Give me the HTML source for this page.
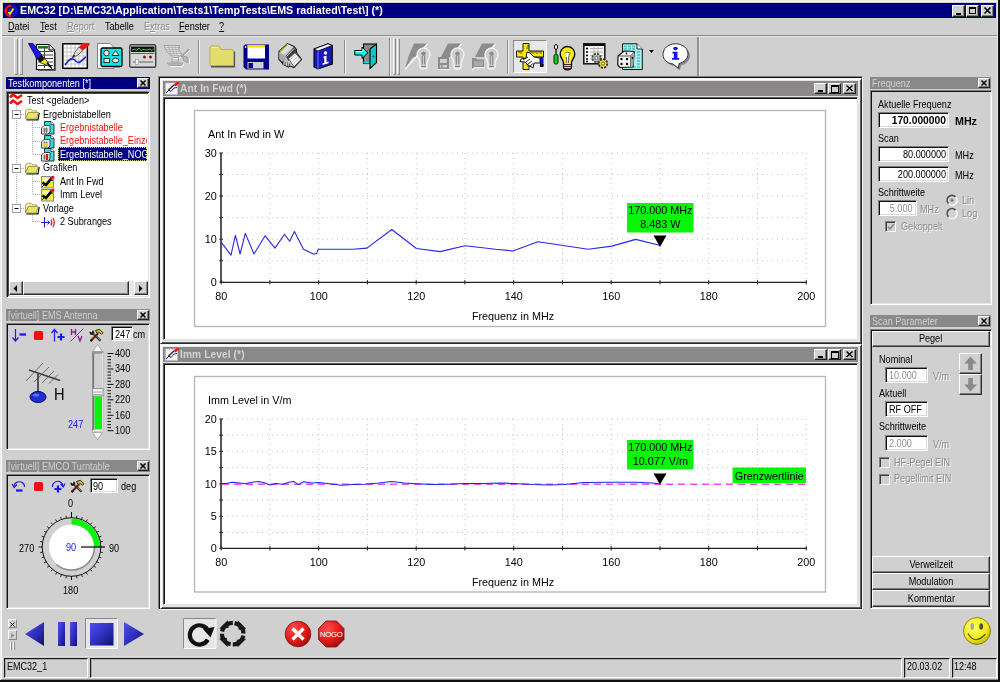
<!DOCTYPE html>
<html>
<head>
<meta charset="utf-8">
<title>EMC32</title>
<style>
*{box-sizing:border-box;margin:0;padding:0}
html,body{width:1000px;height:682px;overflow:hidden;background:#d0d0d0}
body{position:relative;font-family:"Liberation Sans",sans-serif;font-size:11px;color:#000;line-height:13px}
.a{position:absolute}
.t{position:absolute;white-space:nowrap;line-height:13px;font-size:10.6px;transform:scaleX(.86);transform-origin:0 50%}
.b{transform:scaleX(.97);font-size:11px}
.s{display:inline-block;font-size:10.6px;transform:scaleX(.86);transform-origin:0 50%}
.r .s{transform-origin:100% 50%}
.rais .s{transform-origin:50% 50%}
.navy{background:#000080}
.sunk{position:absolute;border:1px solid;border-color:#808080 #fff #fff #808080;box-shadow:inset 1px 1px 0 #101010}
.panel{position:absolute;border-style:solid;border-width:1px;border-color:#808080 #fff #fff #808080;box-shadow:inset 1px 1px 0 #101010, inset -1px -1px 0 #e4e4e4}
.rais{position:absolute;border:1px solid;border-color:#fff #303030 #303030 #fff;box-shadow:inset -1px -1px 0 #808080;background:#d0d0d0;text-align:center;font-size:11px;line-height:13px;white-space:nowrap}
.cap{position:absolute;height:12px;font-size:11px;line-height:12px;white-space:nowrap;padding-left:2px;overflow:hidden}
.cg{background:#8a8888;color:#d0d0d0}
.xbtn{position:absolute;width:12px;height:10px;background:#d0d0d0;border:1px solid;border-color:#fff #202020 #202020 #fff;box-shadow:inset -1px -1px 0 #808080}
.dis{color:#8a8a8a;text-shadow:1px 1px 0 #fff}
.inp{position:absolute;background:#fff;border:1px solid;border-color:#808080 #fff #fff #808080;box-shadow:inset 1px 1px 0 #101010, inset -1px -1px 0 #d8d8d8;font-size:11px;line-height:12px;white-space:nowrap;padding:1px 3px 0 3px;overflow:hidden}
.r{text-align:right}
.vsep{position:absolute;width:2px;border-left:1px solid #8a8a8a;border-right:1px solid #f4f4f4}
.grip{position:absolute;width:3px;border:1px solid;border-color:#f8f8f8 #8a8a8a #8a8a8a #f8f8f8}
svg{position:absolute;overflow:visible}
.ct{font-family:"Liberation Sans",sans-serif;font-size:10.8px;fill:#000}
u{text-decoration:underline}
</style>
</head>
<body>

<!-- outer frame -->
<div class="a" style="left:0;top:0;width:1000px;height:682px;border:1px solid;border-color:#ececec #000 #000 #ececec;box-shadow:inset 1px 1px 0 #f8f8f8, inset -1px -1px 0 #808080"></div>
<div class="a" style="left:998px;top:0;width:2px;height:682px;background:#101010"></div>
<div class="a" style="left:997px;top:1px;width:1px;height:679px;background:#e8e8e8"></div>
<div class="a" style="left:0;top:680px;width:1000px;height:2px;background:#101010"></div>
<div class="a" style="left:1px;top:679px;width:997px;height:1px;background:#909090"></div>

<!-- title bar -->
<div class="a navy" id="titlebar" style="left:3px;top:3px;width:993px;height:15px"></div>
<svg style="left:4px;top:4px" width="14" height="14" viewBox="0 0 14 14">
 <path d="M7 0.5 A6.5 6.5 0 0 0 7 13.5 L7 11 A4 4 0 0 1 7 3 Z" fill="#f01010"/>
 <path d="M7 0.5 A6.5 6.5 0 0 1 7 13.5 L7 11 A4 4 0 0 0 7 3 Z" fill="#1010f0"/>
 <circle cx="7" cy="7" r="3.6" fill="#102090"/>
 <path d="M4.5 8 L6 10 L9.5 4.5" stroke="#ffe000" stroke-width="1.8" fill="none"/>
</svg>
<div class="t b" id="title" style="left:20px;top:4px;color:#fff;font-weight:bold;letter-spacing:0.01px">EMC32 [D:\EMC32\Application\Tests1\TempTests\EMS radiated\Test\] (*)</div>
<!-- title buttons -->
<div class="xbtn" style="left:952px;top:5px;width:13px;height:12px"><div class="a" style="left:3px;top:7px;width:5px;height:2px;background:#000"></div></div>
<div class="xbtn" style="left:966px;top:5px;width:13px;height:12px"><div class="a" style="left:2px;top:1px;width:7px;height:7px;border:1px solid #000;border-top-width:2px"></div></div>
<div class="xbtn" style="left:981px;top:5px;width:13px;height:12px"><svg style="left:2px;top:1px" width="8" height="8"><path d="M0.5 0.5 L6.5 6.5 M6.5 0.5 L0.5 6.5" stroke="#000" stroke-width="1.6"/></svg></div>

<!-- menu -->
<div class="t" style="left:8px;top:20px"><u>D</u>atei</div>
<div class="t" style="left:40px;top:20px"><u>T</u>est</div>
<div class="t dis" style="left:67px;top:20px"><u>R</u>eport</div>
<div class="t" style="left:105px;top:20px">Tabelle</div>
<div class="t dis" style="left:144px;top:20px">E<u>x</u>tras</div>
<div class="t" style="left:179px;top:20px"><u>F</u>enster</div>
<div class="t" style="left:219px;top:20px"><u>?</u></div>
<div class="a" style="left:2px;top:35px;width:995px;height:1px;background:#8a8a8a"></div>
<div class="a" style="left:2px;top:36px;width:995px;height:1px;background:#e8e8e8"></div>
<!-- ===== main toolbar ===== -->
<div class="grip" style="left:14px;top:38px;height:37px;width:4px"></div>
<div class="grip" style="left:19px;top:38px;height:37px;width:4px"></div>

<!-- icon1: sheet + pen -->
<svg style="left:28px;top:43px" width="28" height="28" viewBox="0 0 28 28">
 <path d="M8.5 1.5 H21 L26.5 7 V26.5 H8.5 Z" fill="#fff" stroke="#000" stroke-width="1.2"/>
 <path d="M21 1.5 V7 H26.5" fill="#d8d8d8" stroke="#000" stroke-width="1"/>
 <rect x="10" y="3" width="10" height="2.6" fill="#108010"/>
 <path d="M10 8.5H25 M10 12H25 M10 15.500H25 M10 19H25 M10 22.500H25 M16.5 3V25" stroke="#404040" stroke-width="1"/>
 <path d="M27 9 V27 H10" stroke="#404040" stroke-width="1.4" fill="none"/>
 <path d="M0.500 0.500 L5 0.500 L14 12 L9 16 Z" fill="#1818e0" stroke="#000060" stroke-width="0.8"/>
 <path d="M9 16 L14 12 L17 15.500 L12 19.500 Z" fill="#101010"/>
 <path d="M12 19.500 L17 15.500 L23 24 Z" fill="#f0e020" stroke="#202020" stroke-width="0.8"/>
 <path d="M19 20 L24 25.500" stroke="#000" stroke-width="1.4"/>
</svg>

<!-- icon2: chart + pencil -->
<svg style="left:62px;top:43px" width="28" height="27" viewBox="0 0 28 27">
 <rect x="0.8" y="0.8" width="24.500" height="24.500" fill="#fff" stroke="#000" stroke-width="1.5"/>
 <path d="M5 2V24 M9 2V24 M13 2V24 M17 2V24 M21 2V24 M2 5H24 M2 9H24 M2 13H24 M2 17H24 M2 21H24" stroke="#c4c4c4" stroke-width="1"/>
 <path d="M3 22 C6 18 8 15 11 16 S15 21 18 19 S22 15 24 14" stroke="#1828c0" stroke-width="1.6" fill="none"/>
 <path d="M10 15 L13 9 L17 4 L21 7 L16 12 Z" fill="#d8d8d8" stroke="#505050" stroke-width="0.8"/>
 <path d="M10 15 L12 11.500 L13.500 13 Z" fill="#202020"/>
 <path d="M17 4 L21 0 L27.500 0 L27.500 2 L21 7.500 Z" fill="#e81818"/>
</svg>

<!-- icon3: shapes -->
<svg style="left:97px;top:43px" width="26" height="27" viewBox="0 0 26 27">
 <path d="M0.500 0.500 H13 L17 4.500 V25.500 H0.500 Z" fill="#fff" stroke="#808080" stroke-width="1"/>
 <rect x="4" y="5" width="21" height="18.500" rx="1.500" fill="#10e8e8" stroke="#000" stroke-width="1.3"/>
 <circle cx="9.500" cy="10" r="2.800" fill="#e8e8e8" stroke="#303030" stroke-width="1"/>
 <path d="M15 12.500 L18.500 7.500 L22 12.500 Z" fill="#e8e8e8" stroke="#303030" stroke-width="1"/>
 <rect x="7" y="15.500" width="5.500" height="4" fill="#e8e8e8" stroke="#303030" stroke-width="1"/>
 <ellipse cx="18.500" cy="17.500" rx="3.400" ry="2.300" fill="#e8e8e8" stroke="#303030" stroke-width="1"/>
</svg>

<!-- icon4: instrument -->
<svg style="left:129px;top:44px" width="28" height="24" viewBox="0 0 28 24">
 <rect x="0.700" y="0.700" width="26" height="22.500" rx="1.500" fill="#d8d8d8" stroke="#404040" stroke-width="1.4"/>
 <rect x="2" y="2.500" width="23.500" height="5.500" fill="#101010"/>
 <path d="M3 6 L6 5 L8 6.500 L10 4 L12 6.500 L14 5.500 L18 6 L21 5 L23 6.500 L25 4.500" stroke="#18e018" stroke-width="1" fill="none"/>
 <path d="M2 9.500H25.500" stroke="#606060" stroke-width="1"/>
 <circle cx="15.500" cy="13" r="1.500" fill="#901010"/>
 <circle cx="21.500" cy="13" r="1.500" fill="#901010"/>
 <path d="M4 18H24" stroke="#909090" stroke-width="1.6"/>
 <rect x="6.500" y="15.500" width="3" height="5" fill="#f4f4f4" stroke="#909090" stroke-width="0.600"/>
</svg>

<!-- icon5: disabled -->
<svg style="left:163px;top:44px" width="28" height="25" viewBox="0 0 28 25">
 <g stroke="#f8f8f8" stroke-width="1" fill="none" transform="translate(1,1)">
  <path d="M1 1.500 H17 M5 9 L10 13.500 H15 L19 10 M4 19 H20 L18.500 21.500 H6 Z M19 12 L26 5 M22 12.500 L25.500 14 V19"/>
 </g>
 <g stroke="#a4a4a4" stroke-width="1" fill="none">
  <path d="M1 1.500 H17 L15.500 6 L19 10 L15 13.500 H10 L5 9 L2.500 5 Z" fill="#dcdcdc"/>
  <path d="M2.500 3.500 H16.500 M3 5.500 H15.500 M4.500 7.500 H16.500 M6 9.500 H18 M8 11.500 H17 M5 1.500 L9 13 M8.500 1.500 L12 13.500 M12 1.500 L14.500 13 M15 1.500 L16.500 7" stroke-width="0.800" stroke="#b0b0b0"/>
  <path d="M9 14 V18 H15.500 V13.500" stroke="#a0a0a0"/>
  <path d="M4 19 H20 L18.500 21.500 H6 Z" fill="#b4b4b4"/>
  <path d="M18 13 L26 5" stroke-width="1.400" stroke="#9a9a9a"/>
  <path d="M19.500 11.500 L25 13.500 V18.500 L20.500 16.500 Z" fill="#bcbcbc" stroke="#9a9a9a"/>
 </g>
</svg>

<div class="vsep" style="left:198px;top:40px;height:33px"></div>

<!-- icon6: folder -->
<svg style="left:209px;top:45px" width="27" height="23" viewBox="0 0 27 23">
 <path d="M2 21.800 H25.300 V6.500" stroke="#505050" stroke-width="1.600" fill="none"/>
 <path d="M1 20.500 V3 Q1 1 3 1 H9 Q11 1 11.500 3 L12 4.500 H22.500 Q24.500 4.500 24.500 6.500 V20.500 Z" fill="#e4dc6c" stroke="#b8b050" stroke-width="1"/>
 <path d="M2.500 2.500 H9.500" stroke="#f4f0a0" stroke-width="1"/>
</svg>

<!-- icon7: floppy -->
<svg style="left:243px;top:44px" width="27" height="26" viewBox="0 0 27 26">
 <path d="M2 0.500 H26 V25.500 H3 L0.500 23 V2 Z" fill="#000088"/>
 <rect x="4.500" y="1" width="17.500" height="13.500" fill="#fff"/>
 <rect x="4.500" y="1" width="17.500" height="2.600" fill="#f0e010"/>
 <rect x="4.500" y="18" width="16" height="6.500" fill="#d0d0d0"/>
 <rect x="5.500" y="19" width="4.500" height="5" fill="#000088"/>
 <rect x="2" y="2" width="1.200" height="2" fill="#fff"/>
</svg>

<!-- icon8: printer -->
<svg style="left:278px;top:43px" width="25" height="26" viewBox="0 0 25 26">
 <defs><linearGradient id="pg" x1="0" y1="0" x2="1" y2="1"><stop offset="0" stop-color="#fbfbfb"/><stop offset="1" stop-color="#b4b4b4"/></linearGradient></defs>
 <path d="M1 8.500 L9.500 0.600 L16 3.500 L18.500 6.500 L18.500 9.500 L23.600 16.500 L16 24.500 L12 23 L10.500 24.200 L6 21.700 L0.800 16.200 Z" fill="#c4c4c4" stroke="#181818" stroke-width="1.100"/>
 <path d="M1.600 8.800 L9.600 1.300 L15.600 3.900 L7.500 12.900 Z" fill="url(#pg)"/>
 <path d="M1.900 8.800 L9.300 1.800" stroke="#b8a818" stroke-width="1.300"/>
 <path d="M1.300 9.200 L7.500 13 V21.500 L1.300 16 Z" fill="#a8a8a8"/>
 <path d="M7.500 13 L15.800 4 L18 6.600 L18 9.600 L10.500 18 Z" fill="#404040"/>
 <path d="M8.500 13.500 L16 5.500" stroke="#e0e0e0" stroke-width="1"/>
 <path d="M10.500 15.500 L17 9.800 L23 16.500 L16 23.800 Z" fill="#fbfbfb" stroke="#404040" stroke-width="0.800"/>
 <path d="M12.500 16.500 L17.500 12 M14 18.500 L19.500 13.800 M15.500 20.500 L21 15.600" stroke="#b8b8b8" stroke-width="0.900"/>
 <path d="M5 18 V21.500 M7 19 V22.500 M9.200 19.500 V23.200 M11 20.500 V23.500" stroke="#000" stroke-width="1.100"/>
 <path d="M6 18.500 V22 M8.100 19.300 V22.800 M10.100 20 V23.400" stroke="#fff" stroke-width="0.900"/>
</svg>

<!-- icon9: book -->
<svg style="left:313px;top:43px" width="20" height="27" viewBox="0 0 20 27">
 <path d="M1 6 L15 0.800 L19.300 2.500 V21 L5 26 L1 24 Z" fill="#1818c0" stroke="#000" stroke-width="1.100"/>
 <path d="M1 6 L15 0.800 L19.300 2.500 L5 8 Z" fill="#f0f0f0" stroke="#000" stroke-width="0.800"/>
 <path d="M5 8 V26" stroke="#6868f0" stroke-width="1.200"/>
 <circle cx="12.500" cy="10" r="1.700" fill="#fff"/>
 <path d="M10.500 13.500 L13.500 12.800 V19 L15.500 18.500 V20.200 L9.500 22 V20.300 L11.300 19.800 V15 L10.500 15.200 Z" fill="#fff"/>
</svg>

<div class="vsep" style="left:344px;top:40px;height:33px"></div>

<!-- icon10: door -->
<svg style="left:354px;top:43px" width="24" height="27" viewBox="0 0 24 27">
 <rect x="9.500" y="1" width="12" height="19.500" fill="#8a8a8a" stroke="#000" stroke-width="1.100"/>
 <path d="M9.500 18.500 H16 V20.500 H9.500 Z" fill="#10d8d8"/>
 <path d="M16 6 L22.500 0.800 V19.500 L16 25.500 Z" fill="#10c8c8" stroke="#000" stroke-width="1.100"/>
 <circle cx="19.500" cy="13.500" r="0.900" fill="#404040"/>
 <path d="M0.800 7.500 H8 V4 L14 9.800 L8 15.500 V12 H0.800 Z" fill="#10f0f0" stroke="#000" stroke-width="1"/>
 <path d="M1.500 8.500 H9 V6" stroke="#fff" stroke-width="0.900" fill="none"/>
</svg>

<div class="vsep" style="left:389px;top:38px;height:38px"></div>
<div class="grip" style="left:393px;top:38px;height:37px"></div>
<div class="grip" style="left:397px;top:38px;height:37px"></div>

<!-- disabled bulbs -->
<svg style="left:404px;top:43px" width="28" height="27" viewBox="0 0 28 27">
 <path d="M10 0.500 H23 L12 14 L9 14 L1 25.500 L5 12 Z" fill="#8c8c8c"/>
 <path d="M23.500 1 L1 26.500" stroke="#f8f8f8" stroke-width="1.300"/>
 <path d="M19.500 5 C24 5 26 9 26 11.500 C26 15 23 17 23 20 V24 C23 25.500 21 26 19.500 26 S16 25.500 16 24 V20 C16 17 13 15 13 11.500 C13 9 15 5 19.500 5 Z" fill="#d0d0d0" stroke="#f4f4f4" stroke-width="1.300"/>
 <path d="M17 10 L19.500 8.300 L22 10 L21 12.800 H18 Z" fill="#8c8c8c"/><path d="M18.300 13 V21.500 M20.700 13 V21.500 M17 23.300 H22" stroke="#8c8c8c" stroke-width="1.300" fill="none"/>
</svg>
<svg style="left:437px;top:43px" width="29" height="27" viewBox="0 0 29 27">
 <path d="M11 0.500 H24 L13 14 L4 14 Z" fill="#8c8c8c"/>
 <path d="M24.500 1 L16 11" stroke="#f8f8f8" stroke-width="1.300"/>
 <rect x="1" y="14" width="11" height="12" fill="#8c8c8c"/>
 <rect x="3" y="16" width="7" height="4" fill="#d0d0d0"/><rect x="3" y="22" width="7" height="2.500" fill="#d0d0d0"/><rect x="4" y="22.500" width="2" height="1.500" fill="#8c8c8c"/>
 <path d="M1 26.500 H12.500" stroke="#f8f8f8" stroke-width="1"/>
 <path d="M20.500 5 C25 5 27 9 27 11.500 C27 15 24 17 24 20 V24 C24 25.500 22 26 20.500 26 S17 25.500 17 24 V20 C17 17 14 15 14 11.500 C14 9 16 5 20.500 5 Z" fill="#d0d0d0" stroke="#f4f4f4" stroke-width="1.300"/>
 <path d="M18 10 L20.500 8.300 L23 10 L22 12.800 H19 Z" fill="#8c8c8c"/><path d="M19.300 13 V21.500 M21.700 13 V21.500 M18 23.300 H23" stroke="#8c8c8c" stroke-width="1.300" fill="none"/>
</svg>
<svg style="left:471px;top:43px" width="29" height="27" viewBox="0 0 29 27">
 <path d="M11 0.500 H24 L13 14 L4 14 Z" fill="#8c8c8c"/>
 <path d="M24.500 1 L16 11" stroke="#f8f8f8" stroke-width="1.300"/>
 <path d="M1 15 H5 L6 16.500 H13 V24 H3 L1 26 Z" fill="#8c8c8c"/>
 <path d="M3 18 H12 V23 H3 Z" fill="#a8a8a8"/>
 <path d="M1 26.800 L3.500 24.800 H13.500" stroke="#f8f8f8" stroke-width="1" fill="none"/>
 <path d="M20.500 5 C25 5 27 9 27 11.500 C27 15 24 17 24 20 V24 C24 25.500 22 26 20.500 26 S17 25.500 17 24 V20 C17 17 14 15 14 11.500 C14 9 16 5 20.500 5 Z" fill="#d0d0d0" stroke="#f4f4f4" stroke-width="1.300"/>
 <path d="M18 10 L20.500 8.300 L23 10 L22 12.800 H19 Z" fill="#8c8c8c"/><path d="M19.300 13 V21.500 M21.700 13 V21.500 M18 23.300 H23" stroke="#8c8c8c" stroke-width="1.300" fill="none"/>
</svg>

<div class="vsep" style="left:507px;top:40px;height:33px"></div>

<!-- pressed button + ruler icon -->
<div class="a" style="left:513px;top:40px;width:34px;height:33px;background:#e8e8e8;border:1px solid;border-color:#8a8a8a #fbfbfb #fbfbfb #8a8a8a"></div>
<svg style="left:516px;top:43px" width="28" height="27" viewBox="0 0 28 27">
 <path d="M7 0.500 H13 V8 H27.500 V14 H13 V26.500 H7 V14 H0.500 V8 H7 Z" fill="#f4e418" stroke="#202000" stroke-width="1"/>
 <path d="M3 8V10 M5 8V11 M15 8V10 M17 8V11 M19 8V10 M21 8V11 M23 8V10 M25 8V11 M11 3H13 M10 5H13 M11 18H13 M10 21H13 M11 23H13" stroke="#403000" stroke-width="0.800"/>
 <rect x="24" y="14" width="3.500" height="9" fill="#1010e0"/><rect x="24" y="21" width="3.500" height="3" fill="#101010"/>
 <path d="M11 9 L14 10 L18 14 L24 15 V20 L18 20 L17 25 L12 22 L9 19 L4 18.500 L5 16 L10 15 Z" fill="#fff" stroke="#101010" stroke-width="1"/>
 <path d="M7 17 L12 14 M10 19 L14 16 M12 21 L16 18 M14 23 L17 20.500" stroke="#101010" stroke-width="0.900"/>
</svg>

<!-- screwdriver + bulb -->
<svg style="left:553px;top:44px" width="23" height="27" viewBox="0 0 23 27">
 <ellipse cx="3" cy="3" rx="1.600" ry="2.500" fill="#fff" stroke="#000" stroke-width="1"/>
 <path d="M3 5.500 V11" stroke="#000" stroke-width="1.200"/>
 <rect x="1" y="10.500" width="4" height="9.500" rx="1.500" fill="#18c818" stroke="#003000" stroke-width="1"/>
 <path d="M14.500 2.500 C19.500 2.500 21.800 7 21.800 10 C21.800 14 18.500 16 18.500 19 V23 C18.500 25 16.500 25.800 14.500 25.800 S10.500 25 10.500 23 V19 C10.500 16 7.200 14 7.200 10 C7.200 7 9.500 2.500 14.500 2.500 Z" fill="#f4e818" stroke="#000" stroke-width="1.300"/>
 <path d="M12 9 L14.500 8 L17 9 L15.500 13 V19 M13.500 13 V19" stroke="#707070" stroke-width="1" fill="#fff"/>
 <path d="M11 20.500 H18 M11 22.500 H18 M12 24.500 H17" stroke="#303030" stroke-width="1.200"/>
</svg>

<!-- list + gears -->
<svg style="left:583px;top:43px" width="28" height="26" viewBox="0 0 28 26">
 <rect x="0.800" y="0.800" width="21" height="20" fill="#f4f4f4" stroke="#101010" stroke-width="1.500"/>
 <path d="M1 2 H21.500" stroke="#101010" stroke-width="2"/>
 <path d="M3 5.500H5 M3 9H5 M3 12.500H5 M3 16H5 M3 18.500H5" stroke="#000" stroke-width="1.600"/>
 <path d="M7 5.500H20 M7 9H20 M7 12.500H20 M7 16H12 M11 4V17 M15 4V12" stroke="#b0b0b0" stroke-width="1"/>
 <circle cx="13.500" cy="15" r="4.200" fill="#c0c0c0" stroke="#404040" stroke-width="1.800" stroke-dasharray="2.200 1.100"/>
 <circle cx="13.500" cy="15" r="1.600" fill="#fff" stroke="#404040" stroke-width="0.800"/>
 <circle cx="20" cy="20.500" r="4.300" fill="#e8e020" stroke="#303030" stroke-width="1.800" stroke-dasharray="2.200 1.100"/>
 <circle cx="20" cy="20.500" r="1.600" fill="#fff" stroke="#404040" stroke-width="0.800"/>
</svg>

<!-- dice + sheet -->
<svg style="left:617px;top:43px" width="27" height="28" viewBox="0 0 27 28">
 <path d="M5.500 0.800 H20 L25.300 6 V26.500 H5.500 Z" fill="#a8f0f0" stroke="#101010" stroke-width="1"/>
 <path d="M20 0.800 V6 H25.300" fill="#fff" stroke="#101010" stroke-width="0.900"/>
 <path d="M7 3.500H19 M7 6H19 M20 9H24 M20 12H24 M20 15H24 M20 18H24 M20 21H24 M8 24H24" stroke="#40c8c8" stroke-width="1.400" stroke-dasharray="3 1"/>
 <path d="M1 13 L7 8 L17.500 8.500 L17 12 L16 24 L3 24.500 L0.800 22 Z" fill="#f4f4f4" stroke="#101010" stroke-width="1.200"/>
 <path d="M1.500 13 L13.500 13 L17.500 8.500 M13.500 13 L13.500 24" stroke="#404040" stroke-width="0.900" fill="none"/>
 <path d="M13.500 13 L17.500 8.500 L16.500 22 L13.500 24 Z" fill="#a0a0a0"/>
 <circle cx="4.500" cy="16" r="1.200"/><circle cx="10" cy="16" r="1.200"/><circle cx="4.500" cy="21" r="1.200"/><circle cx="10" cy="21" r="1.200"/><circle cx="9.500" cy="10.500" r="0.900"/><circle cx="15.500" cy="15" r="0.900"/>
</svg>
<svg style="left:649px;top:50px" width="6" height="4" viewBox="0 0 6 4"><path d="M0 0 H5 L2.500 3 Z" fill="#000"/></svg>

<!-- info bubble -->
<svg style="left:662px;top:43px" width="28" height="27" viewBox="0 0 28 27">
 <path d="M14.500 2 C22 2 27 6.500 27 12 C27 16.500 23 20.500 18 21.500 L17 26.500 L12 22 C6 21.500 2 17.500 2 12.500 C2 6.500 7 2 14.500 2 Z" fill="#8a8a8a" transform="translate(1,1)"/>
 <path d="M13.500 0.800 C21 0.800 26 5.500 26 11 C26 15.500 22 19.500 17 20.500 L16.500 25.500 L11 21 C5 20.500 1 16.500 1 11.500 C1 5.500 6 0.800 13.500 0.800 Z" fill="#fff" stroke="#303030" stroke-width="1"/>
 <ellipse cx="13.500" cy="5.500" rx="2.300" ry="1.700" fill="#1010f0"/>
 <path d="M10.500 8.800 H15.500 V15 H17.200 V16.800 H10 V15 H11.800 V10.500 H10.500 Z" fill="#1010f0"/>
</svg>

<div class="a" style="left:697px;top:37px;width:2px;height:39px;background:#929292"></div>
<div class="a" style="left:699px;top:37px;width:1px;height:39px;background:#e4e4e4"></div>
<!-- ===== left: Testkomponenten ===== -->
<div class="cap navy" style="left:6px;top:77px;width:144px;color:#fff"><span class="s">Testkomponenten [*]</span></div>
<div class="xbtn" style="left:137px;top:78px"><svg style="left:2px;top:1px" width="7" height="6"><path d="M0.500 0.500 L5.500 5.500 M5.500 0.500 L0.500 5.500" stroke="#000" stroke-width="1.500"/></svg></div>
<div class="sunk" style="left:6px;top:91px;width:144px;height:207px;background:#fff;box-shadow:inset 1px 1px 0 #181818, inset -1px -1px 0 #e0e0e0, inset 2px 2px 0 #484848"></div>

<!-- tree lines -->
<svg style="left:9px;top:93px" width="60" height="140" viewBox="0 0 60 140">
 <g stroke="#b0b0b0" stroke-width="1" stroke-dasharray="1 1" fill="none">
  <path d="M7.500 13 V116"/>
  <path d="M8 21.500 H16 M8 75.500 H16 M8 115.500 H16"/>
  <path d="M23.500 28 V62 M24 34.500 H32 M24 48.500 H32 M24 61.500 H32"/>
  <path d="M23.500 82 V102 M24 88.500 H32 M24 101.500 H32"/>
  <path d="M23.500 122 V129 M24 128.500 H32"/>
 </g>
 <g fill="#fff" stroke="#a0a0a0" stroke-width="1">
  <rect x="3.500" y="17.500" width="8" height="8"/><rect x="3.500" y="71.500" width="8" height="8"/><rect x="3.500" y="111.500" width="8" height="8"/>
 </g>
 <path d="M5.500 21.500 H9.500 M5.500 75.500 H9.500 M5.500 115.500 H9.500" stroke="#000" stroke-width="1"/>
</svg>

<!-- root icon -->
<svg style="left:9px;top:93px" width="15" height="14" viewBox="0 0 15 14">
 <path d="M1 4.500 L4 1.500 L8.500 5 L13 2" stroke="#f01010" stroke-width="2.600" fill="none" stroke-linejoin="round"/>
 <path d="M1 10.500 L4 7.500 L8.500 11 L13 8" stroke="#f01010" stroke-width="2.600" fill="none" stroke-linejoin="round"/>
</svg>
<!-- folders -->
<svg style="left:25px;top:108px" width="15" height="13" viewBox="0 0 15 13"><use href="#fold"/></svg>
<svg style="left:25px;top:162px" width="15" height="13" viewBox="0 0 15 13"><use href="#fold"/></svg>
<svg style="left:25px;top:202px" width="15" height="13" viewBox="0 0 15 13"><use href="#fold"/></svg>
<svg width="0" height="0" style="left:0;top:0"><defs>
 <g id="fold">
  <path d="M1.500 11.800 H13 L14.200 5 " stroke="#181818" stroke-width="1.300" fill="none"/>
  <path d="M0.500 3 L2 1.200 H6 L7.500 2.800 H11.500 V4.500 H3.500 L0.500 10.500 Z" fill="#f4f0a0" stroke="#8a8a40" stroke-width="0.700"/>
  <path d="M3.500 4.500 H13.500 L11 11 H0.500 Z" fill="#ece468" stroke="#8a8a40" stroke-width="0.700"/>
 </g>
 <g id="tbl">
  <path d="M3.500 0.500 H10 L13 3.500 V13 H3.500 Z" fill="#30e0e0" stroke="#202020" stroke-width="0.900"/>
  <path d="M10 0.500 V3.500 H13" fill="#fff" stroke="#202020" stroke-width="0.700"/>
  <path d="M0.500 7 L3 4.500 H9 V11 L7 13 H0.500 Z" fill="#f0f0f0" stroke="#303030" stroke-width="0.900"/>
  <path d="M2 8 H7 M2 10 H7 M3.500 6.500 V12 M5.500 6.500 V12" stroke="#505050" stroke-width="0.700"/>
 </g>
 <g id="gra">
  <rect x="0.500" y="1.500" width="12" height="11.500" fill="#f4ec38" stroke="#8a8a8a" stroke-width="1"/><path d="M1.500 3 H8 V6 H1.500 Z" fill="#fbf8c0"/>
  <path d="M1 12 L4 9 L6 10 L9 6 L12 5" stroke="#1010d0" stroke-width="1" fill="none"/>
  <path d="M1.500 7.500 L5 10 L10.500 3" stroke="#000" stroke-width="2.500" fill="none"/>
  <path d="M9 2.500 L13 0.500 L13.500 3 L10.500 4.500 Z" fill="#e81010"/>
 </g>
</defs></svg>
<svg style="left:41px;top:121px" width="14" height="14" viewBox="0 0 14 14"><use href="#tbl"/></svg>
<svg style="left:41px;top:135px" width="14" height="14" viewBox="0 0 14 14"><use href="#tbl"/><rect x="2" y="8" width="5" height="3.500" fill="#e8d820"/></svg>
<svg style="left:41px;top:148px" width="14" height="14" viewBox="0 0 14 14"><use href="#tbl"/><rect x="5" y="6" width="2.200" height="6" fill="#e81010"/></svg>
<svg style="left:41px;top:175px" width="14" height="14" viewBox="0 0 14 14"><use href="#gra"/></svg>
<svg style="left:41px;top:188px" width="14" height="14" viewBox="0 0 14 14"><use href="#gra"/></svg>
<svg style="left:41px;top:216px" width="15" height="12" viewBox="0 0 15 12">
 <path d="M0 6.500 H9 M3.500 1 V11.500 M6.500 4.500 L8.500 6.500 L6.500 8.500" stroke="#1818e8" stroke-width="1" fill="none"/>
 <path d="M10 3.500 Q11.500 6.500 10 9.500 M12 2 Q14.500 6.500 12 11" stroke="#e81010" stroke-width="1.200" fill="none"/>
</svg>

<div class="a navy" style="left:58px;top:147px;width:89px;height:14px;outline:1px dotted #d8d070;outline-offset:-1px"></div>
<div class="t" style="left:27px;top:94px">Test &lt;geladen&gt;</div>
<div class="t" style="left:43px;top:108px">Ergebnistabellen</div>
<div class="t" style="left:60px;top:121px;color:#f01010">Ergebnistabelle</div>
<div class="t" style="left:60px;top:134px;color:#f01010;width:101px;overflow:hidden">Ergebnistabelle_Einzel</div>
<div class="t" style="left:60px;top:148px;color:#fff;width:101px;overflow:hidden">Ergebnistabelle_NOGO</div>
<div class="t" style="left:43px;top:161px">Grafiken</div>
<div class="t" style="left:60px;top:175px">Ant In Fwd</div>
<div class="t" style="left:60px;top:188px">Imm Level</div>
<div class="t" style="left:43px;top:202px">Vorlage</div>
<div class="t" style="left:60px;top:215px">2 Subranges</div>

<!-- h scrollbar -->
<div class="a" style="left:9px;top:281px;width:139px;height:14px;background:#e8e8e8"></div>
<div class="rais" style="left:9px;top:281px;width:14px;height:14px"><svg style="left:3px;top:3px" width="5" height="7"><path d="M4 0 V7 L0.500 3.500 Z" fill="#000"/></svg></div>
<div class="rais" style="left:134px;top:281px;width:14px;height:14px"><svg style="left:4px;top:3px" width="5" height="7"><path d="M0 0 V7 L3.500 3.500 Z" fill="#000"/></svg></div>
<div class="rais" style="left:23px;top:281px;width:106px;height:14px"></div>

<!-- ===== EMS Antenna ===== -->
<div class="cap cg" style="left:6px;top:309px;width:144px"><span class="s">[virtuell] EMS Antenna</span></div>
<div class="xbtn" style="left:137px;top:310px"><svg style="left:2px;top:1px" width="7" height="6"><path d="M0.500 0.500 L5.500 5.500 M5.500 0.500 L0.500 5.500" stroke="#000" stroke-width="1.500"/></svg></div>
<div class="panel" style="left:6px;top:323px;width:144px;height:127px"></div>
<svg style="left:12px;top:329px" width="15" height="13" viewBox="0 0 15 13">
 <path d="M3.500 0 V12 M0.500 8.500 L3.500 12 L6.500 8.500" stroke="#1818f0" stroke-width="1.200" fill="none"/><path d="M7.500 5.500 H14" stroke="#1818f0" stroke-width="2.300"/>
</svg>
<div class="a" style="left:34px;top:331px;width:9px;height:9px;background:#f01010;border-radius:1.500px"></div>
<svg style="left:51px;top:329px" width="14" height="13" viewBox="0 0 14 13">
 <path d="M3.500 12.500 V0.500 M0.500 4 L3.500 0.500 L6.500 4" stroke="#1818f0" stroke-width="1.200" fill="none"/><path d="M6.500 8 H13.500 M10 4.500 V11.500" stroke="#1818f0" stroke-width="2.200"/>
</svg>
<svg style="left:70px;top:328px" width="14" height="14" viewBox="0 0 14 14">
 <path d="M0.500 13.500 L13.500 0.500" stroke="#a030b0" stroke-width="1"/>
 <path d="M1.500 1 V7 M5.500 1 V7 M1.500 4 H5.500" stroke="#901890" stroke-width="1.300"/>
 <path d="M8 8 L10 13 L12 8" stroke="#901890" stroke-width="1.300" fill="none"/>
</svg>
<svg style="left:89px;top:329px" width="14" height="13" viewBox="0 0 14 13"><use href="#tools"/></svg>
<svg width="0" height="0" style="left:0;top:0"><defs><g id="tools">
 <path d="M11.500 11.800 L4.500 5" stroke="#303030" stroke-width="2.200"/>
 <path d="M11 11 L5 5" stroke="#909090" stroke-width="0.700"/>
 <circle cx="2.800" cy="3.600" r="2.300" fill="#181818"/>
 <path d="M0 1.500 L3 3.800 L3.500 0.500 Z" fill="#e8e8e8"/>
 <path d="M1.800 11.800 L9 4.500" stroke="#701818" stroke-width="2"/>
 <path d="M1.500 12.300 L3 10.800" stroke="#181818" stroke-width="2.200"/>
 <path d="M6.500 1.500 L10.500 0.300 L14 3.800 L12.500 5.300 L10.500 3.800 L8 4.200 Z" fill="#d8c018" stroke="#181818" stroke-width="0.900"/>
</g></defs></svg>
<div class="inp" style="left:111px;top:326px;width:22px;height:15px;padding:1px 0 0 3px"><span class="s">247</span></div>
<div class="t" style="left:133px;top:328px">cm</div>

<!-- antenna picture -->
<svg style="left:25px;top:361px" width="40" height="43" viewBox="0 0 40 43">
 <path d="M1 20 L18 2 M9 21 L24 6 M17 22 L29 10 M24 22.500 L33 13.500" stroke="#606060" stroke-width="0.900"/>
 <path d="M4 9 L35 19.500" stroke="#404040" stroke-width="1.600"/>
 <path d="M13 13 V34" stroke="#202020" stroke-width="1.400"/>
 <ellipse cx="13" cy="36" rx="8" ry="5.500" fill="#2030d0" stroke="#000060" stroke-width="1"/>
 <ellipse cx="11" cy="34" rx="3" ry="1.500" fill="#6070f0"/>
</svg>
<div class="t" style="left:54px;top:386px;font-size:17px;line-height:17px">H</div>
<div class="t" style="left:68px;top:418px;color:#1818f0">247</div>

<!-- slider -->
<svg style="left:90px;top:344px" width="60" height="98" viewBox="0 0 60 98">
 <path d="M7.500 0.500 L12.500 7.500 H2.500 Z" fill="#f4f4f4" stroke="#a0a0a0" stroke-width="0.800"/>
 <path d="M7.500 96 L12.500 88.500 H2.500 Z" fill="#f4f4f4" stroke="#a0a0a0" stroke-width="0.800"/>
 <rect x="2.500" y="8" width="10.500" height="78.500" fill="#d0d0d0" stroke="#909090" stroke-width="1"/>
 <path d="M3.500 9 V86 M3.500 9 H12" stroke="#787878" stroke-width="1.200" fill="none"/>
 <path d="M12.800 9 V86.500 H3" stroke="#f8f8f8" stroke-width="1" fill="none"/>
 <rect x="4.500" y="52.500" width="7.500" height="32.500" fill="#08f408"/>
 <rect x="2.500" y="44.500" width="10.500" height="7.500" fill="#e8e8e8" stroke="#8a8a8a" stroke-width="0.800"/>
 <path d="M3 47 H12.500 M3 49.500 H12.500" stroke="#fff" stroke-width="1"/><path d="M3 48 H12.500 M3 50.500 H12.500" stroke="#9a9a9a" stroke-width="0.800"/>
 <g stroke="#101010" stroke-width="1">
  <path d="M17.500 9.500 H23.500 M17.500 25 H23.500 M17.500 40.400 H23.500 M17.500 55.800 H23.500 M17.500 71.300 H23.500 M17.500 86.700 H23.500"/>
  <path d="M17.500 12.600H21 M17.500 15.700H21 M17.500 18.800H21 M17.500 21.900H21 M17.500 28H21 M17.500 31.100H21 M17.500 34.200H21 M17.500 37.300H21 M17.500 43.500H21 M17.500 46.600H21 M17.500 49.700H21 M17.500 52.800H21 M17.500 58.900H21 M17.500 62H21 M17.500 65.100H21 M17.500 68.200H21 M17.500 74.400H21 M17.500 77.500H21 M17.500 80.600H21 M17.500 83.700H21"/>
 </g>
</svg>
<div class="t" style="left:115px;top:347px">400</div>
<div class="t" style="left:115px;top:362px">340</div>
<div class="t" style="left:115px;top:378px">280</div>
<div class="t" style="left:115px;top:393px">220</div>
<div class="t" style="left:115px;top:409px">160</div>
<div class="t" style="left:115px;top:424px">100</div>

<!-- ===== EMCO Turntable ===== -->
<div class="cap cg" style="left:6px;top:460px;width:144px"><span class="s">[virtuell] EMCO Turntable</span></div>
<div class="xbtn" style="left:137px;top:461px"><svg style="left:2px;top:1px" width="7" height="6"><path d="M0.500 0.500 L5.500 5.500 M5.500 0.500 L0.500 5.500" stroke="#000" stroke-width="1.500"/></svg></div>
<div class="panel" style="left:6px;top:474px;width:144px;height:135px"></div>
<svg style="left:12px;top:480px" width="14" height="12" viewBox="0 0 14 12">
 <path d="M2 6 A5 4.500 0 0 1 12.500 7" stroke="#1818f0" stroke-width="1.200" fill="none"/><path d="M0 4 L2.200 7.500 L5 4.500" stroke="#1818f0" stroke-width="1.200" fill="none"/><path d="M4 10.500 H10.500" stroke="#1818f0" stroke-width="2.200"/>
</svg>
<div class="a" style="left:34px;top:482px;width:9px;height:9px;background:#f01010;border-radius:1.500px"></div>
<svg style="left:51px;top:479px" width="14" height="14" viewBox="0 0 14 14">
 <path d="M1.500 8 A5 5 0 0 1 12 7" stroke="#1818f0" stroke-width="1.200" fill="none"/><path d="M9.500 5 L12.200 8 L14 4.500" stroke="#1818f0" stroke-width="1.200" fill="none"/><path d="M3.500 10 H10.500 M7 6.500 V13.500" stroke="#1818f0" stroke-width="2.200"/>
</svg>
<svg style="left:70px;top:480px" width="14" height="13" viewBox="0 0 14 13"><use href="#tools"/></svg>
<div class="inp" style="left:90px;top:478px;width:28px;height:15px;padding:1px 0 0 2px"><span class="s">90</span></div>
<div class="t" style="left:121px;top:480px">deg</div>

<svg style="left:36px;top:512px" width="72" height="72" viewBox="-35.500 -35 72 72">
 <circle r="29.300" fill="none" stroke="#101010" stroke-width="1"/>
 <g id="ticks" stroke="#101010" stroke-width="1"></g>
 <path d="M0 -28.500 A28.500 28.500 0 0 1 28.500 0 L22 0 A22 22 0 0 0 0 -22 Z" fill="#08f408"/>
 <circle r="22.500" fill="#fff"/>
 <path d="M-15 17.500 A23 23 0 0 0 23 0" stroke="#8a8a8a" stroke-width="1.500" fill="none"/>
 <path d="M9.500 0 H33.500" stroke="#000" stroke-width="1.200"/>
 <path d="M0 -29 V-35 M0 29 V33 M-29 0 H-33" stroke="#101010" stroke-width="1"/>
 <g stroke="#101010" stroke-width="0.900">
  <path d="M5.090 -28.850 L5.520 -31.300 M10.020 -27.530 L10.880 -29.880 M14.650 -25.370 L15.900 -27.540 M18.830 -22.440 L20.440 -24.360 M22.440 -18.830 L24.360 -20.440 M25.370 -14.650 L27.540 -15.900 M27.530 -10.020 L29.880 -10.880 M28.850 -5.090 L31.300 -5.520"/>
  <path d="M28.850 5.090 L31.300 5.520 M27.530 10.020 L29.880 10.880 M25.370 14.650 L27.540 15.900 M22.440 18.830 L24.360 20.440 M18.830 22.440 L20.440 24.360 M14.650 25.370 L15.900 27.540 M10.020 27.530 L10.880 29.880 M5.090 28.850 L5.520 31.300"/>
  <path d="M-5.090 28.850 L-5.520 31.300 M-10.020 27.530 L-10.880 29.880 M-14.650 25.370 L-15.900 27.540 M-18.830 22.440 L-20.440 24.360 M-22.440 18.830 L-24.360 20.440 M-25.370 14.650 L-27.540 15.900 M-27.530 10.020 L-29.880 10.880 M-28.850 5.090 L-31.300 5.520"/>
  <path d="M-28.850 -5.090 L-31.300 -5.520 M-27.530 -10.020 L-29.880 -10.880 M-25.370 -14.650 L-27.540 -15.900 M-22.440 -18.830 L-24.360 -20.440 M-18.830 -22.440 L-20.440 -24.360 M-14.650 -25.370 L-15.900 -27.540 M-10.020 -27.530 L-10.880 -29.880 M-5.090 -28.850 L-5.520 -31.300"/>
 </g>
</svg>
<div class="t" style="left:68px;top:497px">0</div>
<div class="t" style="left:109px;top:542px">90</div>
<div class="t" style="left:19px;top:542px">270</div>
<div class="t" style="left:63px;top:584px">180</div>
<div class="t" style="left:66px;top:541px;color:#1818f0">90</div>
<!-- ===== MDI client ===== -->
<div class="a" style="left:158px;top:76px;width:705px;height:534px;border:1px solid;border-color:#808080 #f4f4f4 #f4f4f4 #808080;box-shadow:inset 1px 1px 0 #101010;background:#d0d0d0"></div>
<div class="a" style="left:160px;top:78px;width:702px;height:266px;background:#e4e4e4;border:1px solid;border-color:#f4f4f4 #282828 #282828 #f4f4f4;box-shadow:inset 1px 1px 0 #fff, inset -1px -1px 0 #606060"></div>
<div class="a" style="left:163px;top:81px;width:695px;height:15px;background:#8a8888"></div>
<svg style="left:165px;top:82px" width="14" height="13" viewBox="0 0 14 13"><rect x="0.500" y="1" width="12" height="11.500" fill="#f4f4f4" stroke="#c0c0c0" stroke-width="0.600"/><path d="M1 11 L4 8 L6 9.500 L9 6 L12 5.500" stroke="#2020d0" stroke-width="1" fill="none"/><path d="M3 8.500 L9 3" stroke="#202020" stroke-width="1.200"/><path d="M8.500 2.500 L12 0 L14 0 L14 1.500 L10.500 4.500 Z" fill="#f01010"/></svg>
<div class="t b" style="left:180px;top:82px;color:#d2d2d2;font-weight:bold;font-size:10.500px;letter-spacing:0.100px">Ant In Fwd (*)</div>
<div class="xbtn" style="left:814px;top:83px;width:13px;height:11px"><div class="a" style="left:3px;top:6px;width:5px;height:2px;background:#000"></div></div>
<div class="xbtn" style="left:828px;top:83px;width:13px;height:11px"><div class="a" style="left:2px;top:1px;width:8px;height:8px;border:1px solid #000;border-top-width:2px"></div></div>
<div class="xbtn" style="left:843px;top:83px;width:13px;height:11px"><svg style="left:2px;top:1px" width="8" height="7"><path d="M0.500 0.500 L6.500 6 M6.500 0.500 L0.500 6" stroke="#000" stroke-width="1.500"/></svg></div>
<div class="sunk" style="left:163px;top:97px;width:695px;height:243px;background:#fff;border-color:#606060 #e0e0e0 #e0e0e0 #606060"></div>
<svg style="left:0;top:0;opacity:.999" width="1000" height="682" viewBox="0 0 1000 682">
<rect x="194.500" y="110.5" width="631" height="216.0" fill="#fff" stroke="#b8b8b8" stroke-width="1.400"/>
<path d="M269.9 153 V282 M318.7 153 V282 M367.4 153 V282 M416.2 153 V282 M464.9 153 V282 M513.7 153 V282 M562.5 153 V282 M611.2 153 V282 M660.0 153 V282 M708.7 153 V282 M757.5 153 V282 M806.2 153 V282 M222 153 H807 M222 174.5 H807 M222 196.1 H807 M222 217.6 H807 M222 239.2 H807 M222 260.7 H807" stroke="#c4c4c4" stroke-width="1" stroke-dasharray="1 4" fill="none"/>
<path d="M221 153 V282.5" stroke="#383838" stroke-width="1.700" fill="none"/>
<path d="M220.500 282.3 H807" stroke="#202020" stroke-width="1.200" fill="none"/>
<path d="M221.2 280.1 V284.5 M269.9 280.1 V284.5 M318.7 280.1 V284.5 M367.4 280.1 V284.5 M416.2 280.1 V284.5 M464.9 280.1 V284.5 M513.7 280.1 V284.5 M562.5 280.1 V284.5 M611.2 280.1 V284.5 M660.0 280.1 V284.5 M708.7 280.1 V284.5 M757.5 280.1 V284.5 M806.2 280.1 V284.5" stroke="#202020" stroke-width="1" fill="none"/>
<text class="ct" x="221.2" y="300" text-anchor="middle">80</text>
<text class="ct" x="318.7" y="300" text-anchor="middle">100</text>
<text class="ct" x="416.2" y="300" text-anchor="middle">120</text>
<text class="ct" x="513.7" y="300" text-anchor="middle">140</text>
<text class="ct" x="611.2" y="300" text-anchor="middle">160</text>
<text class="ct" x="708.7" y="300" text-anchor="middle">180</text>
<text class="ct" x="806.2" y="300" text-anchor="middle">200</text>
<text class="ct" x="513" y="319.5" text-anchor="middle">Frequenz in MHz</text>
<text class="ct" x="208" y="138">Ant In Fwd in W</text>
<text class="ct" x="216.700" y="157" text-anchor="end">30</text>
<path d="M219.300 153 H223" stroke="#303030" stroke-width="1.100"/>
<path d="M219.300 174.5 H223" stroke="#303030" stroke-width="1.100"/>
<text class="ct" x="216.700" y="200.1" text-anchor="end">20</text>
<path d="M219.300 196.1 H223" stroke="#303030" stroke-width="1.100"/>
<path d="M219.300 217.6 H223" stroke="#303030" stroke-width="1.100"/>
<text class="ct" x="216.700" y="243.2" text-anchor="end">10</text>
<path d="M219.300 239.2 H223" stroke="#303030" stroke-width="1.100"/>
<path d="M219.300 260.7 H223" stroke="#303030" stroke-width="1.100"/>
<text class="ct" x="216.700" y="286.2" text-anchor="end">0</text>
<path d="M219.300 282.2 H223" stroke="#303030" stroke-width="1.100"/>
<polyline points="221.1,242.1 231.0,255.2 235.4,235.4 240.1,254.0 245.3,233.4 254.0,254.0 265.1,235.8 275.0,248.1 284.5,234.2 289.7,241.3 294.4,231.4 303.5,249.3 313.4,254.0 316.6,253.6 318.2,249.3 353.0,249.3 366.9,248.1 391.8,229.5 416.4,248.5 440.1,251.6 465.1,245.7 495.6,249.3 511.4,250.8 512.1,251.2 537.9,241.7 588.2,249.3 611.9,246.1 635.7,239.4 659.5,245.3" fill="none" stroke="#2828e8" stroke-width="1.100" stroke-linejoin="round"/>
<rect x="627" y="203" width="66.500" height="29.500" fill="#08f408"/>
<text class="ct" x="660.300" y="214.300" text-anchor="middle">170.000 MHz</text>
<text class="ct" x="660.300" y="228" text-anchor="middle">8.483 W</text>
<path d="M653.500 235.500 H666.500 L660 247 Z" fill="#000"/>
</svg>
<div class="a" style="left:160px;top:344px;width:702px;height:265px;background:#e4e4e4;border:1px solid;border-color:#f4f4f4 #282828 #282828 #f4f4f4;box-shadow:inset 1px 1px 0 #fff, inset -1px -1px 0 #606060"></div>
<div class="a" style="left:163px;top:347px;width:695px;height:15px;background:#8a8888"></div>
<svg style="left:165px;top:348px" width="14" height="13" viewBox="0 0 14 13"><rect x="0.500" y="1" width="12" height="11.500" fill="#f4f4f4" stroke="#c0c0c0" stroke-width="0.600"/><path d="M1 11 L4 8 L6 9.500 L9 6 L12 5.500" stroke="#2020d0" stroke-width="1" fill="none"/><path d="M3 8.500 L9 3" stroke="#202020" stroke-width="1.200"/><path d="M8.500 2.500 L12 0 L14 0 L14 1.500 L10.500 4.500 Z" fill="#f01010"/></svg>
<div class="t b" style="left:180px;top:348px;color:#d2d2d2;font-weight:bold;font-size:10.500px;letter-spacing:0.100px">Imm Level (*)</div>
<div class="xbtn" style="left:814px;top:349px;width:13px;height:11px"><div class="a" style="left:3px;top:6px;width:5px;height:2px;background:#000"></div></div>
<div class="xbtn" style="left:828px;top:349px;width:13px;height:11px"><div class="a" style="left:2px;top:1px;width:8px;height:8px;border:1px solid #000;border-top-width:2px"></div></div>
<div class="xbtn" style="left:843px;top:349px;width:13px;height:11px"><svg style="left:2px;top:1px" width="8" height="7"><path d="M0.500 0.500 L6.500 6 M6.500 0.500 L0.500 6" stroke="#000" stroke-width="1.500"/></svg></div>
<div class="sunk" style="left:163px;top:363px;width:695px;height:242px;background:#fff;border-color:#606060 #e0e0e0 #e0e0e0 #606060"></div>
<svg style="left:0;top:0;opacity:.999" width="1000" height="682" viewBox="0 0 1000 682">
<rect x="194.500" y="376.5" width="631" height="215.5" fill="#fff" stroke="#b8b8b8" stroke-width="1.400"/>
<path d="M269.9 419 V548 M318.7 419 V548 M367.4 419 V548 M416.2 419 V548 M464.9 419 V548 M513.7 419 V548 M562.5 419 V548 M611.2 419 V548 M660.0 419 V548 M708.7 419 V548 M757.5 419 V548 M806.2 419 V548 M222 419 H807 M222 435.2 H807 M222 451.4 H807 M222 467.6 H807 M222 483.9 H807 M222 500.1 H807 M222 516.3 H807 M222 532.5 H807" stroke="#c4c4c4" stroke-width="1" stroke-dasharray="1 4" fill="none"/>
<path d="M221 419 V548.5" stroke="#383838" stroke-width="1.700" fill="none"/>
<path d="M220.500 548.3 H807" stroke="#202020" stroke-width="1.200" fill="none"/>
<path d="M221.2 546.1 V550.5 M269.9 546.1 V550.5 M318.7 546.1 V550.5 M367.4 546.1 V550.5 M416.2 546.1 V550.5 M464.9 546.1 V550.5 M513.7 546.1 V550.5 M562.5 546.1 V550.5 M611.2 546.1 V550.5 M660.0 546.1 V550.5 M708.7 546.1 V550.5 M757.5 546.1 V550.5 M806.2 546.1 V550.5" stroke="#202020" stroke-width="1" fill="none"/>
<text class="ct" x="221.2" y="566" text-anchor="middle">80</text>
<text class="ct" x="318.7" y="566" text-anchor="middle">100</text>
<text class="ct" x="416.2" y="566" text-anchor="middle">120</text>
<text class="ct" x="513.7" y="566" text-anchor="middle">140</text>
<text class="ct" x="611.2" y="566" text-anchor="middle">160</text>
<text class="ct" x="708.7" y="566" text-anchor="middle">180</text>
<text class="ct" x="806.2" y="566" text-anchor="middle">200</text>
<text class="ct" x="513" y="585.5" text-anchor="middle">Frequenz in MHz</text>
<text class="ct" x="208" y="404">Imm Level in V/m</text>
<text class="ct" x="216.700" y="423" text-anchor="end">20</text>
<path d="M219.300 419 H223" stroke="#303030" stroke-width="1.100"/>
<path d="M219.300 435.2 H223" stroke="#303030" stroke-width="1.100"/>
<text class="ct" x="216.700" y="455.4" text-anchor="end">15</text>
<path d="M219.300 451.4 H223" stroke="#303030" stroke-width="1.100"/>
<path d="M219.300 467.6 H223" stroke="#303030" stroke-width="1.100"/>
<text class="ct" x="216.700" y="487.9" text-anchor="end">10</text>
<path d="M219.300 483.9 H223" stroke="#303030" stroke-width="1.100"/>
<path d="M219.300 500.1 H223" stroke="#303030" stroke-width="1.100"/>
<text class="ct" x="216.700" y="520.3" text-anchor="end">5</text>
<path d="M219.300 516.3 H223" stroke="#303030" stroke-width="1.100"/>
<path d="M219.300 532.5 H223" stroke="#303030" stroke-width="1.100"/>
<text class="ct" x="216.700" y="552.4" text-anchor="end">0</text>
<path d="M219.300 548.4 H223" stroke="#303030" stroke-width="1.100"/>
<path d="M222 484.300 H807" stroke="#f848f8" stroke-width="1.400" stroke-dasharray="7 5" fill="none"/>
<polyline points="221.1,483.4 226.3,483.4 232.2,482.2 240.1,483.0 245.3,483.8 252.0,482.2 258.8,481.4 265.1,483.0 269.9,485.0 275.8,483.4 282.5,484.2 288.9,482.2 293.6,481.4 298.4,484.6 303.5,481.8 311.4,483.0 319.4,482.6 329.3,483.8 341.1,485.3 353.0,484.6 364.9,484.2 378.8,483.0 391.8,481.4 404.5,483.0 416.4,483.8 432.2,484.6 448.1,484.2 465.1,483.4 483.7,483.4 499.6,483.0 511.4,483.4 512.9,483.4 532.7,484.6 548.6,485.0 564.4,484.6 584.2,482.6 608.0,482.2 635.7,482.2 651.5,483.0 659.5,483.4" fill="none" stroke="#2020f0" stroke-width="1.050" stroke-linejoin="round"/>
<rect x="627" y="440" width="66.500" height="29.500" fill="#08f408"/>
<text class="ct" x="660.300" y="451.300" text-anchor="middle">170.000 MHz</text>
<text class="ct" x="660.300" y="465" text-anchor="middle">10.077 V/m</text>
<path d="M653.500 473.500 H666.500 L660 484.500 Z" fill="#000"/>
<rect x="732.500" y="467.500" width="73.500" height="15.500" fill="#08f408"/>
<text class="ct" x="769.300" y="479.500" text-anchor="middle">Grenzwertlinie</text>
</svg>
<!-- ===== right: Frequenz ===== -->
<div class="cap cg" style="left:870px;top:77px;width:121px"><span class="s">Frequenz</span></div>
<div class="xbtn" style="left:978px;top:78px"><svg style="left:2px;top:1px" width="7" height="6"><path d="M0.500 0.500 L5.500 5.500 M5.500 0.500 L0.500 5.500" stroke="#000" stroke-width="1.500"/></svg></div>
<div class="panel" style="left:870px;top:90px;width:122px;height:215px"></div>
<div class="t" style="left:878px;top:98px">Aktuelle Frequenz</div>
<div class="inp r" style="left:878px;top:112px;width:71px;height:16px;padding-right:2px;font-weight:bold"><span class="s" style="transform:scaleX(.97)">170.000000</span></div>
<div class="t b" style="left:955px;top:115px;font-weight:bold">MHz</div>
<div class="t" style="left:878px;top:132px">Scan</div>
<div class="inp r" style="left:878px;top:146px;width:71px;height:16px;padding-right:2px"><span class="s">80.000000</span></div>
<div class="t" style="left:955px;top:149px">MHz</div>
<div class="inp r" style="left:878px;top:166px;width:71px;height:16px;padding-right:2px"><span class="s">200.000000</span></div>
<div class="t" style="left:955px;top:169px">MHz</div>
<div class="t" style="left:878px;top:186px">Schrittweite</div>
<div class="inp r" style="left:878px;top:200px;width:39px;height:16px;color:#909090"><span class="s">5.000</span></div>
<div class="t dis" style="left:920px;top:203px">MHz</div>
<svg style="left:946px;top:194px" width="13" height="26" viewBox="0 0 13 26">
 <circle cx="6" cy="6.200" r="4.300" fill="#d4d4d4"/><path d="M2.500 9.500 A4.700 4.700 0 0 1 9.500 2.800" stroke="#505050" stroke-width="1.700" fill="none"/><path d="M2.800 9.800 A4.700 4.700 0 0 0 9.800 3" stroke="#fbfbfb" stroke-width="1.300" fill="none"/><circle cx="6" cy="6.200" r="1.700" fill="#808080"/>
 <circle cx="6" cy="19.500" r="4.300" fill="#d4d4d4"/><path d="M2.500 22.800 A4.700 4.700 0 0 1 9.500 16.100" stroke="#505050" stroke-width="1.700" fill="none"/><path d="M2.800 23.100 A4.700 4.700 0 0 0 9.800 16.300" stroke="#fbfbfb" stroke-width="1.300" fill="none"/>
</svg>
<div class="t dis" style="left:962px;top:194px">Lin</div>
<div class="t dis" style="left:962px;top:207px">Log</div>
<div class="a" style="left:885px;top:221px;width:11px;height:11px;background:#d0d0d0;border:1px solid;border-color:#808080 #fff #fff #808080;box-shadow:inset 1px 1px 0 #404040"></div>
<svg style="left:887px;top:223px" width="8" height="8" viewBox="0 0 8 8"><path d="M0.800 3.500 L3 6 L7 1" stroke="#8a8a8a" stroke-width="1.600" fill="none"/></svg>
<div class="t dis" style="left:901px;top:220px">Gekoppelt</div>

<!-- ===== right: Scan Parameter ===== -->
<div class="cap cg" style="left:870px;top:315px;width:121px;height:12px;line-height:12px"><span class="s">Scan Parameter</span></div>
<div class="xbtn" style="left:978px;top:316px"><svg style="left:2px;top:1px" width="7" height="6"><path d="M0.500 0.500 L5.500 5.500 M5.500 0.500 L0.500 5.500" stroke="#000" stroke-width="1.500"/></svg></div>
<div class="panel" style="left:870px;top:329px;width:122px;height:280px"></div>
<div class="rais" style="left:872px;top:331px;width:118px;height:16px;padding-top:0px"><span class="s">Pegel</span></div>
<div class="t" style="left:879px;top:353px">Nominal</div>
<div class="inp" style="left:885px;top:367px;width:43px;height:16px;color:#909090;padding-top:1px"><span class="s">10.000</span></div>
<div class="t dis" style="left:933px;top:370px">V/m</div>
<div class="rais" style="left:959px;top:353px;width:23px;height:21px"><svg style="left:4px;top:2px" width="13" height="15" viewBox="0 0 13 15"><path d="M6.500 0.500 L12.800 7.500 H8.800 V14 H4.200 V7.500 H0.200 Z" fill="#8a8a8a"/></svg></div>
<div class="rais" style="left:959px;top:374px;width:23px;height:21px"><svg style="left:4px;top:2px" width="13" height="15" viewBox="0 0 13 15"><path d="M6.500 14.500 L12.800 7.500 H8.800 V1 H4.200 V7.500 H0.200 Z" fill="#8a8a8a"/></svg></div>
<div class="t" style="left:879px;top:387px">Aktuell</div>
<div class="inp" style="left:885px;top:401px;width:43px;height:16px;padding-top:1px"><span class="s">RF OFF</span></div>
<div class="t" style="left:879px;top:420px">Schrittweite</div>
<div class="inp" style="left:885px;top:435px;width:43px;height:16px;color:#909090;padding-top:1px"><span class="s">2.000</span></div>
<div class="t dis" style="left:933px;top:438px">V/m</div>
<div class="a" style="left:879px;top:457px;width:11px;height:11px;background:#d0d0d0;border:1px solid;border-color:#808080 #fff #fff #808080;box-shadow:inset 1px 1px 0 #404040"></div>
<div class="t dis" style="left:894px;top:456px">HF-Pegel EIN</div>
<div class="a" style="left:879px;top:474px;width:11px;height:11px;background:#d0d0d0;border:1px solid;border-color:#808080 #fff #fff #808080;box-shadow:inset 1px 1px 0 #404040"></div>
<div class="t dis" style="left:894px;top:472px">Pegellimit EIN</div>
<div class="rais" style="left:872px;top:556px;width:118px;height:17px;padding-top:1px"><span class="s">Verweilzeit</span></div>
<div class="rais" style="left:872px;top:573px;width:118px;height:17px;padding-top:1px"><span class="s">Modulation</span></div>
<div class="rais" style="left:872px;top:590px;width:118px;height:17px;padding-top:1px"><span class="s">Kommentar</span></div>
<!-- ===== bottom toolbar ===== -->
<div class="a" style="left:8px;top:619px;width:9px;height:9px;border:1px solid;border-color:#fff #8a8a8a #8a8a8a #fff"><svg style="left:1px;top:2px" width="5" height="5"><path d="M0.500 0.500 L4.500 4.500 M4.500 0.500 L0.500 4.500" stroke="#000" stroke-width="1"/></svg></div>
<div class="a" style="left:8px;top:630px;width:9px;height:10px;border:1px solid;border-color:#fff #8a8a8a #8a8a8a #fff"><svg style="left:2px;top:2px" width="4" height="5"><path d="M0 0 L3.500 2.500 L0 5 Z" fill="#909090"/></svg></div>
<div class="a" style="left:10px;top:642px;width:2px;height:8px;border-left:1px solid #fff;border-right:1px solid #8a8a8a"></div>
<div class="a" style="left:13px;top:642px;width:2px;height:8px;border-left:1px solid #fff;border-right:1px solid #8a8a8a"></div>

<svg style="left:0;top:612px" width="400" height="46" viewBox="0 612 400 46">
 <defs>
  <linearGradient id="bl" x1="0" y1="0" x2="1" y2="1"><stop offset="0" stop-color="#5050f0"/><stop offset="0.500" stop-color="#3030c0"/><stop offset="1" stop-color="#101070"/></linearGradient>
  <radialGradient id="rd" cx="0.350" cy="0.300" r="0.800"><stop offset="0" stop-color="#ff5050"/><stop offset="0.600" stop-color="#e01818"/><stop offset="1" stop-color="#901010"/></radialGradient>
 </defs>
 <path d="M44 622 V646 L25 634 Z" fill="url(#bl)"/>
 <rect x="58" y="622" width="7" height="24" fill="url(#bl)"/>
 <rect x="70" y="622" width="7" height="24" fill="url(#bl)"/>
 <rect x="85" y="618" width="32.500" height="31" fill="#e6e6e6"/>
 <path d="M85.500 649 V618.500 H117.500" stroke="#8a8a8a" stroke-width="1" fill="none"/>
 <path d="M117.500 618.500 V648.500 H85.500" stroke="#fbfbfb" stroke-width="1" fill="none"/>
 <rect x="90" y="623" width="23.500" height="22.500" fill="url(#bl)"/>
 <path d="M124 622 V646 L144 634 Z" fill="url(#bl)"/>
 <rect x="183" y="618" width="33" height="31" fill="#e6e6e6"/>
 <path d="M183.500 649 V618.500 H216" stroke="#8a8a8a" stroke-width="1" fill="none"/>
 <path d="M216 618.500 V648.500 H183.500" stroke="#fbfbfb" stroke-width="1" fill="none"/>
 <path d="M208.400 631.500 A9.600 9.600 0 1 0 207.800 639.600" stroke="#101010" stroke-width="4.200" fill="none"/>
 <path d="M203 629 L214.500 627 L210.500 637.500 Z" fill="#101010"/>
 <g transform="translate(232.700 633.700)">
  <circle r="10.800" fill="none" stroke="#181818" stroke-width="4.200" stroke-dasharray="6.280 2.200" transform="rotate(-80)"/>
  <path d="M5 -13.500 L13.500 -5 L6 -4 Z M13.500 5 L5 13.500 L4 6 Z M-5 13.500 L-13.500 5 L-6 4 Z M-13.500 -5 L-5 -13.500 L-4 -6 Z" fill="#181818"/>
 </g>
 <circle cx="298" cy="634" r="12.800" fill="url(#rd)" stroke="#801010" stroke-width="0.800"/>
 <path d="M292.500 628.500 L303.500 639.500 M303.500 628.500 L292.500 639.500" stroke="#fff" stroke-width="3.200"/>
 <path d="M326 621 H336.500 L344 628.500 V639.500 L336.500 647 H326 L318.500 639.500 V628.500 Z" fill="url(#rd)" stroke="#801010" stroke-width="0.800"/>
 <text x="331.300" y="636.500" text-anchor="middle" font-family="Liberation Sans, sans-serif" font-size="7.800" fill="#fff" letter-spacing="-0.300">NOGO</text>
</svg>

<!-- smiley -->
<svg style="left:962px;top:616px" width="30" height="30" viewBox="0 0 30 30">
 <defs><radialGradient id="ye" cx="0.400" cy="0.350" r="0.750"><stop offset="0" stop-color="#ffff60"/><stop offset="0.650" stop-color="#f0e818"/><stop offset="1" stop-color="#a09810"/></radialGradient></defs>
 <circle cx="15" cy="15" r="13.500" fill="url(#ye)" stroke="#787010" stroke-width="0.800"/>
 <ellipse cx="10.200" cy="10.500" rx="1.800" ry="3.400" fill="#a8a8a0"/>
 <ellipse cx="19.200" cy="10.500" rx="1.900" ry="3.300" fill="#505030"/>
 <path d="M6 17.500 Q13 29.500 23.500 18" stroke="#605808" stroke-width="1.300" fill="none"/>
</svg>

<!-- ===== status bar ===== -->
<div class="a" style="left:2px;top:656px;width:995px;height:1px;background:#dcdcdc"></div>
<div class="sunk" style="left:4px;top:658px;width:84px;height:20px;box-shadow:inset 1px 1px 0 #a8a8a8;border-color:#181818 #fff #fff #181818"></div>
<div class="sunk" style="left:90px;top:658px;width:812px;height:20px;box-shadow:inset 1px 1px 0 #a8a8a8;border-color:#181818 #fff #fff #181818"></div>
<div class="sunk" style="left:904px;top:658px;width:46px;height:20px;box-shadow:inset 1px 1px 0 #a8a8a8;border-color:#181818 #fff #fff #181818"></div>
<div class="sunk" style="left:952px;top:658px;width:45px;height:20px;box-shadow:inset 1px 1px 0 #a8a8a8;border-color:#181818 #fff #fff #181818"></div>
<div class="t" style="left:7px;top:660px;font-size:10.500px">EMC32_1</div>
<div class="t" style="left:907px;top:660px;font-size:10.500px">20.03.02</div>
<div class="t" style="left:954px;top:660px;font-size:10.500px">12:48</div>
</body>
</html>
